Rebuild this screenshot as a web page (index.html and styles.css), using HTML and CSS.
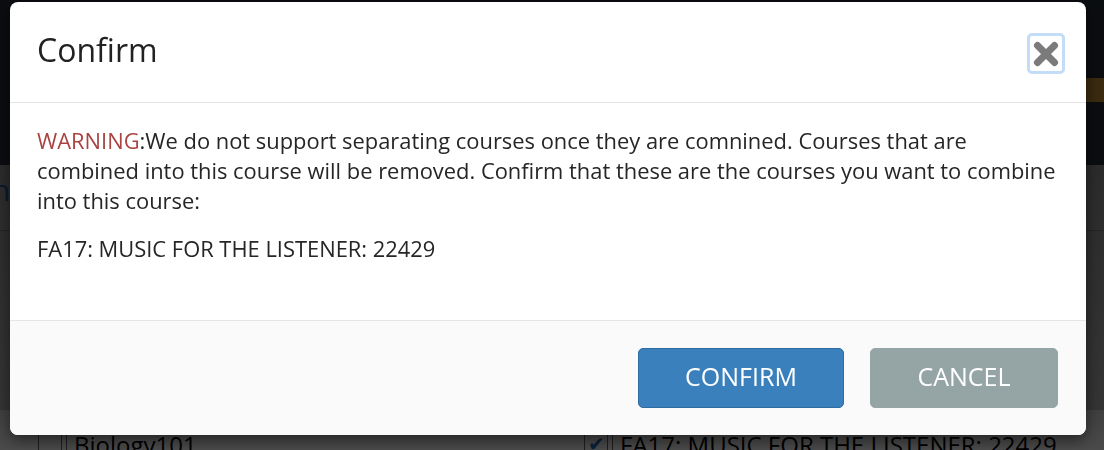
FILE: index.html
```html
<!DOCTYPE html>
<html>

<head>
    <meta charset="UTF-8">
    <title>Confirm</title>
    <link rel="stylesheet" href="styles.css">
</head>

<body>
    <div class="page">
        <div class="topbar">
            <div class="topbar-band"></div>
        </div>
        <div class="content">
            <div class="content-title">n</div>
            <div class="rows">
                <div class="row">
                    <div class="cell">
                        <span class="box"></span>
                        <span class="row-text">Biology101</span>
                    </div>
                    <div class="cell cell-right">
                        <span class="box checked">&#10004;</span>
                        <span class="row-text">FA17: MUSIC FOR THE LISTENER: 22429</span>
                    </div>
                </div>
            </div>
        </div>
    </div>

    <div class="backdrop">
        <div class="modal">
            <div class="modal-header">
                <h4 class="modal-title">Confirm</h4>
                <button class="close" type="button">
                    <svg width="26" height="26" viewBox="0 0 26 26">
                        <path d="M4.5 4.5 L21.5 21.5 M21.5 4.5 L4.5 21.5" stroke="#7b7b7b" stroke-width="7" stroke-linecap="round" fill="none"/>
                    </svg>
                </button>
            </div>
            <div class="modal-body">
                <p><span class="warning">WARNING</span>:We do not support separating courses once they are comnined. Courses that are combined into this course will be removed. Confirm that these are the courses you want to combine into this course:</p>
                <p>FA17: MUSIC FOR THE LISTENER: 22429</p>
            </div>
            <div class="modal-footer">
                <button class="btn btn-primary" type="button">CONFIRM</button>
                <button class="btn btn-cancel" type="button">CANCEL</button>
            </div>
        </div>
    </div>
</body>

</html>
```

FILE: styles.css
```css
body {
    margin: 0;
    background-color: #8a8a8a;
    font-family: "Open Sans", "Noto Sans", sans-serif;
    color: #262626;
    overflow: hidden;
}

.page {
    height: 450px;
    display: flex;
    flex-direction: column;
}

.topbar {
    height: 165px;
    background-color: #1f2530;
    padding-top: 78px;
    box-sizing: border-box;
}

.topbar-band {
    width: 18px;
    height: 24px;
    margin-left: auto;
    background-color: #a57a2c;
}

.content {
    flex: 1;
    display: flex;
    flex-direction: column;
    background: linear-gradient(#7c7c7c, #9a9a9a);
}

.content-title {
    height: 65px;
    font-size: 30px;
    line-height: 50px;
    color: #1e4a80;
    border-bottom: 1px solid #6a6a6a;
    text-indent: -8px;
}

.rows {
    margin-top: auto;
}

.row {
    display: flex;
    height: 40px;
    background: linear-gradient(#b5b5b5, #d5d5d5);
}

.cell {
    flex: 1;
    display: flex;
    align-items: flex-start;
    gap: 4px;
    padding: 22px 0 0 38px;
}

.cell-right {
    padding-left: 26px;
}

.box {
    width: 22px;
    height: 22px;
    border: 1px solid #555;
    font-size: 20px;
    line-height: 22px;
    text-align: center;
    color: #1e5a9e;
}

.row-text {
    font-size: 24px;
    line-height: 26px;
    color: #000;
    border-left: 1px solid #555;
    padding-left: 7px;
}

.backdrop {
    position: fixed;
    top: 0;
    left: 0;
    right: 0;
    bottom: 0;
    background-color: rgba(0, 0, 0, 0.65);
}

.modal {
    width: 1076px;
    margin: 2px 0 0 10px;
    background-color: white;
    border-radius: 8px;
    box-shadow: 0 5px 15px rgba(0, 0, 0, 0.5);
    overflow: hidden;
}

.modal-header {
    height: 100px;
    display: flex;
    align-items: center;
    justify-content: space-between;
    padding: 0 21px 0 27px;
    border-bottom: 1px solid #e5e5e5;
}

.modal-title {
    margin: 0 0 5px 0;
    font-size: 32px;
    font-weight: normal;
    color: #222;
}

.close {
    width: 38px;
    height: 41px;
    display: flex;
    align-items: center;
    justify-content: center;
    padding: 0;
    margin-top: 3px;
    background: white;
    border: 3px solid #c3dcf8;
    border-radius: 5px;
    box-sizing: border-box;
}

.modal-body {
    height: 217px;
    box-sizing: border-box;
    padding: 23px 16px 0 27px;
    font-size: 21.9px;
    line-height: 30px;
}

.modal-body p {
    margin: 0 0 18px 0;
}

.warning {
    color: #a94442;
}

.modal-footer {
    height: 114px;
    display: flex;
    align-items: center;
    justify-content: flex-end;
    gap: 26px;
    padding-right: 28px;
    background-color: #fafafa;
    border-top: 1px solid #e5e5e5;
}

.btn {
    height: 60px;
    padding-bottom: 5px;
    font-family: "Open Sans", "Noto Sans", sans-serif;
    font-size: 25px;
    color: white;
    border-radius: 5px;
    cursor: pointer;
}

.btn-primary {
    width: 206px;
    background-color: #3a80bd;
    border: 1px solid #2e6da4;
}

.btn-cancel {
    width: 188px;
    background-color: #95a5a6;
    border: 1px solid #95a5a6;
}
```
